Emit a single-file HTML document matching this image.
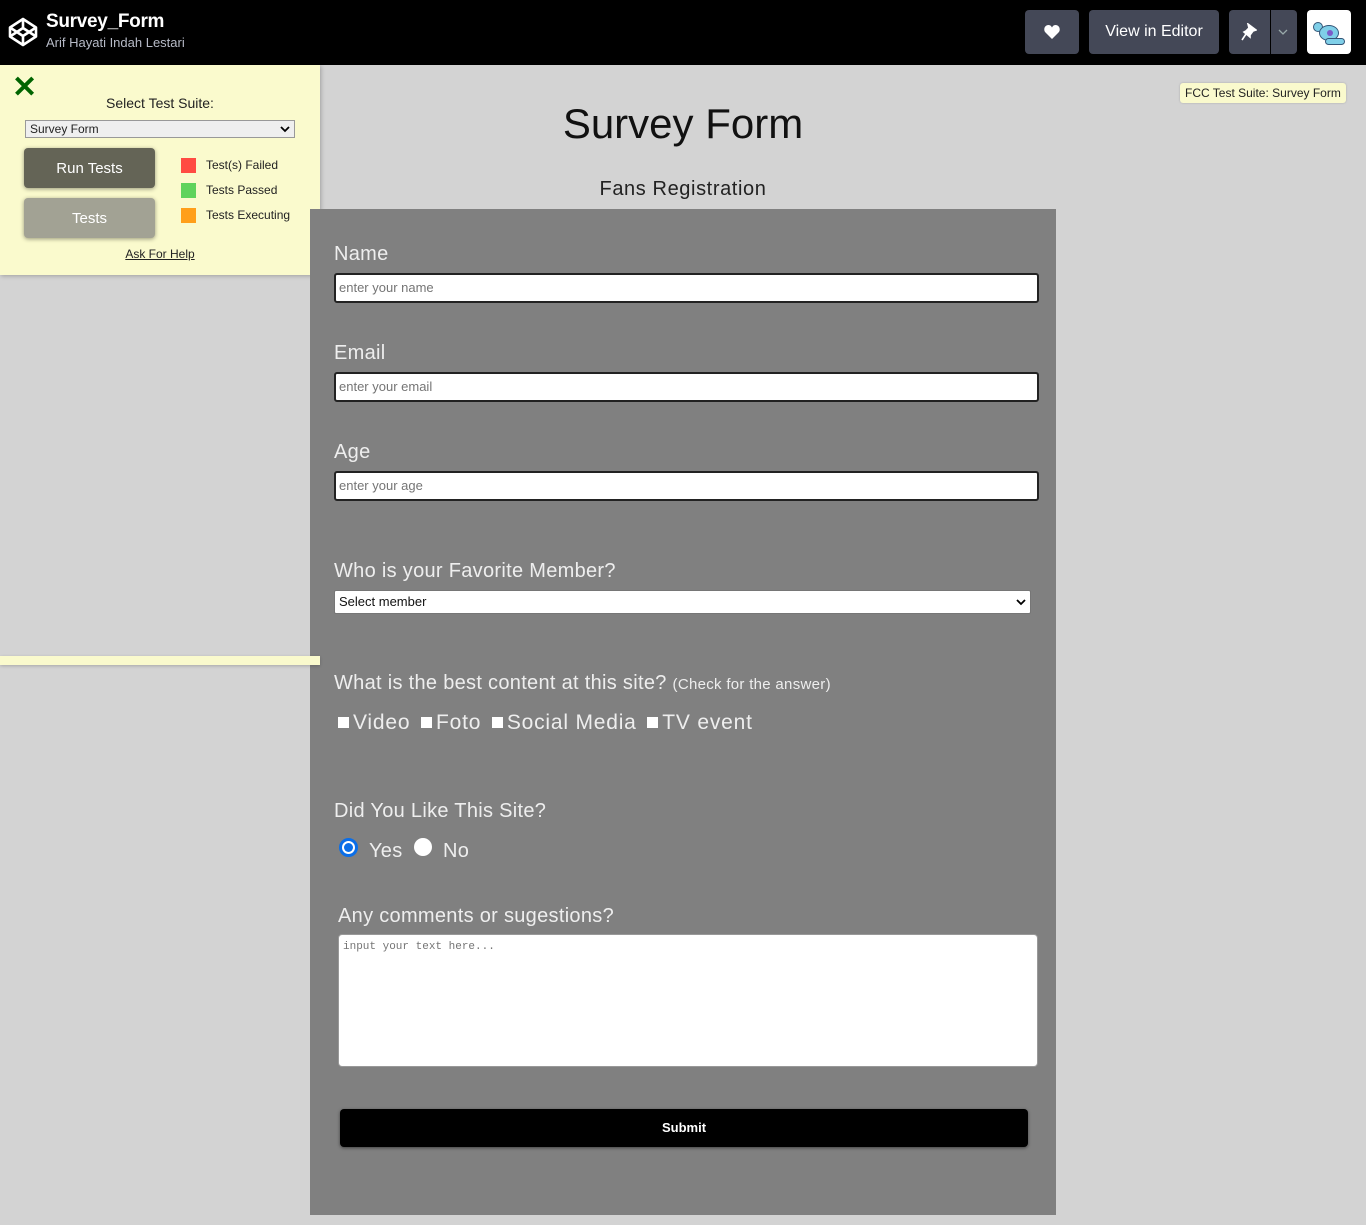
<!DOCTYPE html>
<html><head><meta charset="utf-8">
<style>
*{box-sizing:border-box;margin:0;padding:0}
body{width:1366px;height:1225px;background:#d3d3d3;font-family:"Liberation Sans",sans-serif;position:relative;overflow:hidden}
.a{position:absolute}
.hdr{left:0;top:0;width:1366px;height:65px;background:#000}
.btn{background:#444857;border-radius:4px;color:#fff}
.lbl{color:#eee;font-size:20px;letter-spacing:.3px}
.inp{background:#fff;border:2px solid #222;border-radius:3px;color:#757575;font-size:13px;padding-left:3px;line-height:26px;height:30px}
.sq{display:inline-block;width:11px;height:11px;background:#fff;margin-right:4px;vertical-align:1px}
</style></head><body>
<div class="a hdr"></div>
<svg class="a" style="left:8px;top:17px" width="30" height="30" viewBox="0 0 30 30" fill="none" stroke="#fff" stroke-width="2.6" stroke-linejoin="round"><path d="M15 2 L28 10.5 V19.5 L15 28 L2 19.5 V10.5 Z M2 10.5 L15 19 L28 10.5 M2 19.5 L15 11 L28 19.5 M15 2 V11 M15 19 V28"/></svg>
<div class="a" style="left:46px;top:11px;color:#fff;font-size:19px;font-weight:bold;letter-spacing:-.3px">Survey_Form</div>
<div class="a" style="left:46px;top:35px;color:#b7bbc7;font-size:13px">Arif Hayati Indah Lestari</div>
<div class="a btn" style="left:1025px;top:10px;width:54px;height:44px"><svg style="position:absolute;left:19px;top:15px" width="16" height="14" viewBox="0 0 16 14"><path d="M8 14 L1.5 7.5 C-1 5 .5 0 4.5 0 C6.5 0 7.5 1.5 8 2.5 C8.5 1.5 9.5 0 11.5 0 C15.5 0 17 5 14.5 7.5 Z" fill="#fff"/></svg></div>
<div class="a btn" style="left:1089px;top:10px;width:130px;height:44px;font-size:16px;text-align:center;line-height:44px">View in Editor</div>
<div class="a btn" style="left:1229px;top:10px;width:68px;height:44px"><div class="a" style="left:41px;top:0;width:1px;height:44px;background:#000"></div>
<svg class="a" style="left:12px;top:13px" width="16" height="18" viewBox="0 0 16 18"><path d="M7 1 L15 7 L12 8 L9 12 L9 14 L3 9 L5 8 L8 5 Z M5 11 L1 17" fill="#fff" stroke="#fff" stroke-width="1.6"/></svg>
<svg class="a" style="left:49px;top:19px" width="10" height="6" viewBox="0 0 10 6"><path d="M1 1 L5 5 L9 1" fill="none" stroke="#9aa" stroke-width="1.3"/></svg></div>
<div class="a" style="left:1307px;top:10px;width:44px;height:44px;background:#fff;border-radius:4px;overflow:hidden">
<div class="a" style="left:6px;top:12px;width:10px;height:10px;border-radius:50%;background:#7fcfe8;border:1px solid #357"></div>
<div class="a" style="left:12px;top:15px;width:20px;height:16px;border-radius:50%;background:#7fcfe8;border:1px solid #357"></div>
<div class="a" style="left:18px;top:28px;width:20px;height:7px;border-radius:4px;background:#7fcfe8;border:1px solid #357"></div>
<div class="a" style="left:20px;top:20px;width:6px;height:6px;border-radius:50%;background:#7a5cc8"></div></div>

<div class="a" style="left:0;top:65px;width:320px;height:210px;background:#fafacd;box-shadow:1px 1px 4px rgba(0,0,0,.25);border-radius:0 0 4px 0"></div>
<div class="a" style="left:12px;top:73px;color:#006400;font-size:30px;font-weight:bold;line-height:30px">✕</div>
<div class="a" style="left:0;top:95px;width:320px;text-align:center;font-size:14px;color:#222">Select Test Suite:</div>
<div class="a" style="left:25px;top:120px;width:270px;height:18px;background:#efefef;border:1px solid #999;font-size:12px;line-height:16px;padding-left:4px;color:#222">Survey Form<svg class="a" style="right:4px;top:5px" width="10" height="7" viewBox="0 0 10 7"><path d="M1 1 L5 5 L9 1" fill="none" stroke="#000" stroke-width="1.8"/></svg></div>
<div class="a" style="left:24px;top:148px;width:131px;height:40px;background:#646456;border-radius:4px;box-shadow:0 1px 4px rgba(0,0,0,.4);color:#fff;font-size:15px;text-align:center;line-height:42px">Run Tests</div>
<div class="a" style="left:24px;top:198px;width:131px;height:40px;background:#a2a294;border-radius:4px;box-shadow:0 1px 4px rgba(0,0,0,.4);color:#fff;font-size:15px;text-align:center;line-height:42px">Tests</div>
<div class="a" style="left:181px;top:158px;width:15px;height:15px;background:#ff4b42"></div>
<div class="a" style="left:181px;top:183px;width:15px;height:15px;background:#5fd35c"></div>
<div class="a" style="left:181px;top:208px;width:15px;height:15px;background:#ff9f1a"></div>
<div class="a" style="left:206px;top:158px;font-size:12px;color:#222">Test(s) Failed</div>
<div class="a" style="left:206px;top:183px;font-size:12px;color:#222">Tests Passed</div>
<div class="a" style="left:206px;top:208px;font-size:12px;color:#222">Tests Executing</div>
<div class="a" style="left:0;top:247px;width:320px;text-align:center;font-size:12px;color:#222;text-decoration:underline">Ask For Help</div>
<div class="a" style="left:1180px;top:83px;height:20px;padding:0 5px;background:#fafacd;border-radius:3px;font-size:12px;line-height:20px;color:#222;box-shadow:0 0 2px rgba(0,0,0,.2)">FCC Test Suite: Survey Form</div>

<div class="a" style="left:0;top:100px;width:1366px;text-align:center;font-size:42px;color:#111">Survey Form</div>
<div class="a" style="left:0;top:178px;width:1366px;text-align:center;font-size:20px;color:#222;letter-spacing:.6px">Fans Registration</div>

<div class="a" style="left:310px;top:209px;width:746px;height:1006px;background:#808080"></div>
<div class="a" style="left:0;top:656px;width:320px;height:9px;background:#fafacd;box-shadow:0 1px 3px rgba(0,0,0,.2)"></div>

<div class="a lbl" style="left:334px;top:243px">Name</div>
<div class="a inp" style="left:334px;top:273px;width:705px">enter your name</div>
<div class="a lbl" style="left:334px;top:342px">Email</div>
<div class="a inp" style="left:334px;top:372px;width:705px">enter your email</div>
<div class="a lbl" style="left:334px;top:441px">Age</div>
<div class="a inp" style="left:334px;top:471px;width:705px">enter your age</div>
<div class="a lbl" style="left:334px;top:560px">Who is your Favorite Member?</div>
<div class="a" style="left:334px;top:590px;width:697px;height:24px;background:#fff;border:1px solid #767676;border-radius:2px;font-size:13px;line-height:22px;padding-left:4px;color:#111">Select member<svg class="a" style="right:4px;top:8px" width="10" height="7" viewBox="0 0 10 7"><path d="M1 1 L5 5 L9 1" fill="none" stroke="#000" stroke-width="1.8"/></svg></div>
<div class="a lbl" style="left:334px;top:672px">What is the best content at this site? <span style="font-size:15px">(Check for the answer)</span></div>
<div class="a lbl" style="left:338px;top:711px;font-size:21px;letter-spacing:.8px"><span class="sq"></span>Video <span class="sq" style="margin-left:4px"></span>Foto <span class="sq" style="margin-left:4px"></span>Social Media <span class="sq" style="margin-left:4px"></span>TV event</div>
<div class="a lbl" style="left:334px;top:800px">Did You Like This Site?</div>
<div class="a" style="left:339px;top:838px;width:19px;height:19px;border-radius:50%;background:#fff;border:3px solid #0a6ee8"><div style="width:9px;height:9px;border-radius:50%;background:#0a6ee8;margin:2px"></div></div>
<div class="a lbl" style="left:369px;top:840px">Yes</div>
<div class="a" style="left:414px;top:838px;width:18px;height:18px;border-radius:50%;background:#fff"></div>
<div class="a lbl" style="left:443px;top:840px">No</div>
<div class="a lbl" style="left:338px;top:905px">Any comments or sugestions?</div>
<div class="a" style="left:338px;top:934px;width:700px;height:133px;background:#fff;border:1px solid #999;border-radius:4px;font-family:'Liberation Mono',monospace;font-size:11px;color:#757575;padding:6px 4px">input your text here...</div>
<div class="a" style="left:340px;top:1109px;width:688px;height:38px;background:#000;border-radius:4px;box-shadow:0 1px 3px rgba(0,0,0,.5);color:#fff;font-size:13px;font-weight:bold;text-align:center;line-height:38px">Submit</div>
</body></html>
